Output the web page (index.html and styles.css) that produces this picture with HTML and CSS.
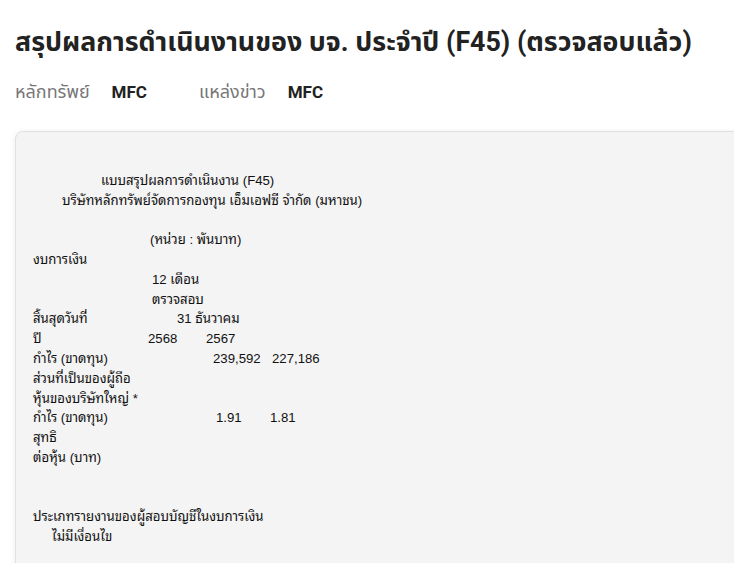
FILE: index.html
```html
<!DOCTYPE html>
<html lang="th">
<head>
<meta charset="utf-8">
<title>F45</title>
<link rel="stylesheet" href="styles.css">
</head>
<body>
<main class="page">
  <h1 class="title">สรุปผลการดำเนินงานของ บจ. ประจำปี (F45) (ตรวจสอบแล้ว)</h1>
  <div class="meta">
    <span class="meta-label">หลักทรัพย์</span>
    <span class="meta-value">MFC</span>
    <span class="meta-label meta-gap">แหล่งข่าว</span>
    <span class="meta-value">MFC</span>
  </div>
  <section class="card">
    <div class="doc">
      <div class="ln blank"></div>
      <div class="ln ind-a">แบบสรุปผลการดำเนินงาน (F45)</div>
      <div class="ln ind-b">บริษัทหลักทรัพย์จัดการกองทุน เอ็มเอฟซี จำกัด (มหาชน)</div>
      <div class="ln blank"></div>
      <div class="ln ind-c">(หน่วย : พันบาท)</div>
      <div class="ln">งบการเงิน</div>
      <div class="ln ind-d">12 เดือน</div>
      <div class="ln ind-d">ตรวจสอบ</div>
      <div class="ln"><span class="c1">สิ้นสุดวันที่</span><span class="c-month">31 ธันวาคม</span></div>
      <div class="ln"><span class="c1 c1-short">ปี</span><span class="c-y1">2568</span><span class="c-y2">2567</span></div>
      <div class="ln"><span class="c1 c1-wide">กำไร (ขาดทุน)</span><span class="c-n1">239,592</span><span class="c-n2">227,186</span></div>
      <div class="ln">ส่วนที่เป็นของผู้ถือ</div>
      <div class="ln">หุ้นของบริษัทใหญ่ *</div>
      <div class="ln"><span class="c1 c1-eps">กำไร (ขาดทุน)</span><span class="c-e1">1.91</span><span class="c-e2">1.81</span></div>
      <div class="ln">สุทธิ</div>
      <div class="ln">ต่อหุ้น (บาท)</div>
      <div class="ln blank"></div>
      <div class="ln blank"></div>
      <div class="ln">ประเภทรายงานของผู้สอบบัญชีในงบการเงิน</div>
      <div class="ln ind-e">ไม่มีเงื่อนไข</div>
    </div>
  </section>
</main>
</body>
</html>
```

FILE: styles.css
```css
html, body {
  margin: 0;
  padding: 0;
  background: #ffffff;
  overflow: hidden;
}
body {
  font-family: "Roboto", "Noto Sans Thai", "Noto Sans", sans-serif;
  color: #1f1f1f;
}
.page {
  padding: 0 0 0 15px;
}
.title {
  margin: 0;
  padding-top: 22px;
  font-size: 26.8px;
  line-height: 40px;
  font-weight: 700;
  color: #222;
  white-space: nowrap;
}
.meta {
  display: flex;
  align-items: baseline;
  margin-top: 17px;
  height: 30px;
  font-size: 18px;
}
.meta-label {
  color: #777;
  margin-right: 22px;
}
.meta-value {
  font-weight: 700;
  color: #222;
  font-size: 17px;
}
.meta-gap {
  margin-left: 52px;
}
.card {
  margin-top: 22px;
  margin-right: -30px;
  background: #f4f4f4;
  border: 1px solid #e0e0e0;
  border-radius: 8px;
  box-shadow: 0 1px 6px rgba(0,0,0,0.08);
  padding: 19px 0 20px 17px;
  min-height: 500px;
}
.doc {
  font-family: "Liberation Sans", "Noto Sans Thai Looped", "Noto Sans", sans-serif;
  font-size: 13.2px;
  color: #111;
}
.ln {
  height: 19.8px;
  line-height: 19.8px;
  white-space: nowrap;
  display: flex;
}
.ind-a { padding-left: 68px; }
.ind-b { padding-left: 29px; }
.ind-c { padding-left: 117px; }
.ind-d { padding-left: 119px; }
.ind-e { padding-left: 19px; }
.c1 { width: 144px; }
.c1-short { width: 115px; }
.c1-wide { width: 180px; }
.c1-eps { width: 183px; }
.c-y1 { width: 58px; }
.c-n1 { width: 59px; }
.c-e1 { width: 54px; }
```
